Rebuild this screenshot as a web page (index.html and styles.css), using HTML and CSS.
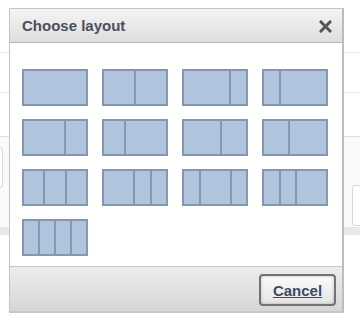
FILE: index.html
```html
<!DOCTYPE html>
<html lang="en">
<head>
    <meta charset="UTF-8">
    <title>Choose layout</title>
    <link rel="stylesheet" href="styles.css">
</head>
<body>
    <div class="page">
        <div class="row row-top"></div>
        <div class="row row-mid"></div>
        <div class="row row-low"></div>
        <div class="toolbar">
            <div class="field field-left"></div>
            <div class="field field-right"></div>
        </div>
        <div class="band"></div>
    </div>

    <div class="dialog">
        <div class="dialog-header">
            <h2>Choose layout</h2>
            <svg class="close" width="13" height="13" viewBox="0 0 13 13">
                <path d="M2 2 L11 11 M11 2 L2 11" stroke="#555" stroke-width="3" stroke-linecap="square"/>
            </svg>
        </div>
        <div class="dialog-body">
            <div class="layouts">
                <div class="thumb"><div class="pane" style="flex:1"></div></div>
                <div class="thumb"><div class="pane" style="flex:1"></div><div class="pane" style="flex:1"></div></div>
                <div class="thumb"><div class="pane" style="flex:3"></div><div class="pane" style="flex:1"></div></div>
                <div class="thumb"><div class="pane" style="flex:1"></div><div class="pane" style="flex:3"></div></div>

                <div class="thumb"><div class="pane" style="flex:2"></div><div class="pane" style="flex:1"></div></div>
                <div class="thumb"><div class="pane" style="flex:1"></div><div class="pane" style="flex:2"></div></div>
                <div class="thumb"><div class="pane" style="flex:3"></div><div class="pane" style="flex:2"></div></div>
                <div class="thumb"><div class="pane" style="flex:2"></div><div class="pane" style="flex:3"></div></div>

                <div class="thumb"><div class="pane" style="flex:1"></div><div class="pane" style="flex:1"></div><div class="pane" style="flex:1"></div></div>
                <div class="thumb"><div class="pane" style="flex:2"></div><div class="pane" style="flex:1"></div><div class="pane" style="flex:1"></div></div>
                <div class="thumb"><div class="pane" style="flex:1"></div><div class="pane" style="flex:2"></div><div class="pane" style="flex:1"></div></div>
                <div class="thumb"><div class="pane" style="flex:1"></div><div class="pane" style="flex:1"></div><div class="pane" style="flex:2"></div></div>

                <div class="thumb"><div class="pane" style="flex:1"></div><div class="pane" style="flex:1"></div><div class="pane" style="flex:1"></div><div class="pane" style="flex:1"></div></div>
            </div>
        </div>
        <div class="dialog-footer">
            <button class="cancel">Cancel</button>
        </div>
    </div>
</body>
</html>
```

FILE: styles.css
```css
* {
    box-sizing: border-box;
}

body {
    margin: 0;
    font-family: "Liberation Sans", Arial, sans-serif;
    background: #fff;
    width: 360px;
    height: 325px;
    overflow: hidden;
    position: relative;
}

/* page behind the dialog */
.page {
    width: 360px;
}

.row {
    border-bottom: 1px solid #e6e6e6;
}

.row-top {
    height: 53px;
}

.row-mid {
    height: 40px;
}

.row-low {
    height: 44px;
    border-bottom-color: #e0e0e0;
}

.toolbar {
    height: 90px;
    display: flex;
    justify-content: space-between;
    background: #fafafa;
    padding-top: 10px;
}

.field {
    height: 41px;
    border: 1px solid #d8d8d8;
    border-radius: 3px;
    background: #fff;
}

.field-left {
    width: 10px;
    margin-left: -7px;
}

.field-right {
    width: 20px;
    margin-top: 38px;
    margin-right: -12px;
}

.band {
    height: 8px;
    background: #e8e8e8;
}

/* dialog */
.dialog {
    position: absolute;
    left: 9px;
    top: 8px;
    width: 335px;
    height: 305px;
    border: 1px solid #c4c4c4;
    border-right: 2px solid #bdbdbd;
    border-bottom: 2px solid #c8c8c8;
    background: #fff;
    display: flex;
    flex-direction: column;
}

.dialog-header {
    height: 34px;
    display: flex;
    align-items: center;
    justify-content: space-between;
    padding: 0 10px 0 12px;
    background: linear-gradient(#f4f4f4, #dedede);
    border-bottom: 1px solid #b4b4b4;
}

.dialog-header h2 {
    margin: 0;
    font-size: 15px;
    font-weight: bold;
    color: #4b4f5c;
}

.close {
    display: block;
    margin-top: 1px;
}

.dialog-body {
    flex: 1;
    padding: 26px 0 0 12px;
}

.layouts {
    display: grid;
    grid-template-columns: repeat(4, 66px);
    grid-auto-rows: 37px;
    column-gap: 14px;
    row-gap: 13px;
}

.thumb {
    display: flex;
    border: 2px solid #8597af;
    background: #b0c4de;
}

.pane + .pane {
    border-left: 2px solid #8597af;
}

.dialog-footer {
    height: 45px;
    display: flex;
    align-items: center;
    justify-content: flex-end;
    padding-right: 6px;
    border-top: 1px solid #c8c8c8;
    background: linear-gradient(#ececec, #d6d6d6);
}

.cancel {
    width: 77px;
    height: 32px;
    margin-top: 2px;
    border: 2px solid #737373;
    border-radius: 4px;
    background: linear-gradient(#fbfbfb, #e4e4e4);
    box-shadow: inset 0 0 3px rgba(0, 0, 0, 0.25);
    font-family: "Liberation Sans", Arial, sans-serif;
    font-size: 15px;
    font-weight: bold;
    color: #3d4a66;
    text-decoration: underline;
    padding: 0;
    cursor: pointer;
}
```
